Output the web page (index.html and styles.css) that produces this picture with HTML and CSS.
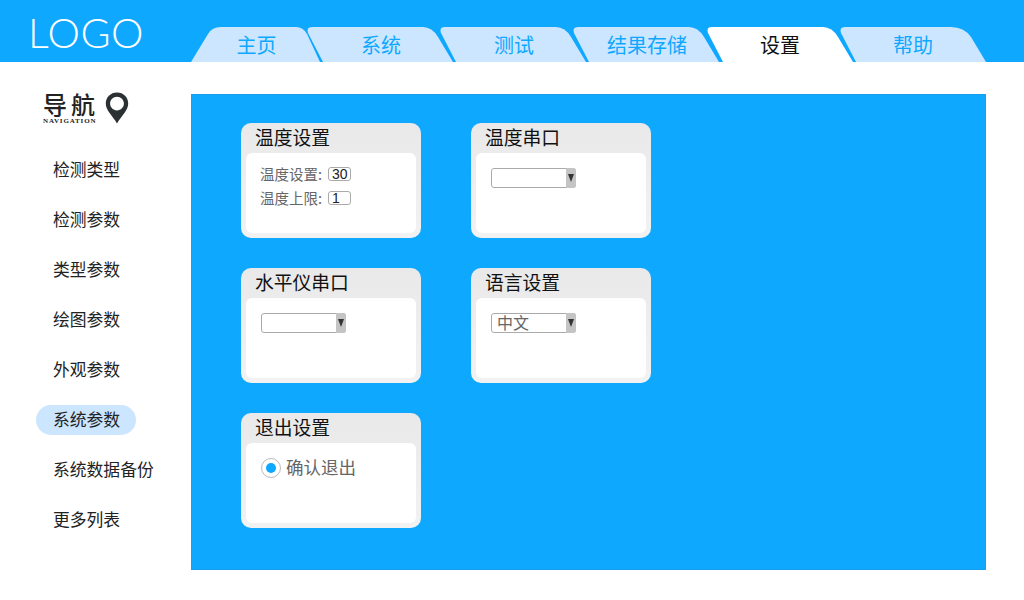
FILE: index.html
```html
<!DOCTYPE html>
<html lang="zh-CN">
<head>
    <meta charset="UTF-8"/>
    <meta name="viewport" content="width=device-width, initial-scale=1.0"/>
    <title>设置</title>
    <link rel="stylesheet" href="styles.css">
</head>
<body>
<header class="top-bar">
    <div class="logo">LOGO</div>
    <nav class="tabs">
        <a class="tab tab-first">主页</a>
        <a class="tab">系统</a>
        <a class="tab">测试</a>
        <a class="tab">结果存储</a>
        <a class="tab tab-active">设置</a>
        <a class="tab tab-last">帮助</a>
    </nav>
</header>

<div class="page">
    <aside class="sidebar">
        <div class="brand">
            <div class="brand-text">
                <div class="brand-title">导航</div>
                <div class="brand-sub">NAVIGATION</div>
            </div>
            <svg class="brand-pin" width="24" height="32" viewBox="0 0 24 32">
                <path fill="#2b3033" fill-rule="evenodd" d="M12 0.5C5.4 0.5 0.8 5.4 0.8 11.6c0 3.4 1.500 6.300 3.600 9.200 2.400 3.300 5.400 6.800 7.600 10.700 2.200-3.900 5.200-7.400 7.600-10.700 2.100-2.900 3.600-5.800 3.600-9.200C23.200 5.400 18.600 0.500 12 0.500zM12 4.800c3.900 0 6.900 3 6.900 6.800s-3 6.800-6.900 6.800-6.900-3-6.900-6.800 3-6.800 6.900-6.800z"/>
            </svg>
        </div>
        <ul class="side-menu">
            <li class="side-item">检测类型</li>
            <li class="side-item">检测参数</li>
            <li class="side-item">类型参数</li>
            <li class="side-item">绘图参数</li>
            <li class="side-item">外观参数</li>
            <li class="side-item side-item-active">系统参数</li>
            <li class="side-item">系统数据备份</li>
            <li class="side-item">更多列表</li>
        </ul>
    </aside>

    <main class="panel">
        <section class="card">
            <h3 class="card-title">温度设置</h3>
            <div class="card-body card-body-rows">
                <label class="field">温度设置: <input class="num-input" type="text" value="30"/></label>
                <label class="field">温度上限: <input class="num-input" type="text" value="1"/></label>
            </div>
        </section>
        <section class="card">
            <h3 class="card-title">温度串口</h3>
            <div class="card-body">
                <div class="select"><span class="select-arrow"></span></div>
            </div>
        </section>
        <section class="card">
            <h3 class="card-title">水平仪串口</h3>
            <div class="card-body">
                <div class="select"><span class="select-arrow"></span></div>
            </div>
        </section>
        <section class="card">
            <h3 class="card-title">语言设置</h3>
            <div class="card-body">
                <div class="select">中文<span class="select-arrow"></span></div>
            </div>
        </section>
        <section class="card">
            <h3 class="card-title">退出设置</h3>
            <div class="card-body">
                <label class="radio-row"><input class="radio" type="radio" checked/>确认退出</label>
            </div>
        </section>
    </main>
</div>
</body>
</html>
```

FILE: styles.css
```css
:root {
    --blue: #0fa8ff;
    --light-blue: #cce6ff;
    --cjk: "Noto Sans CJK SC", "Liberation Sans", sans-serif;
}

html, body {
    height: 100%;
    margin: 0;
    padding: 0;
}

body {
    background-color: white;
    color: #111;
    font-family: var(--cjk);
    overflow: hidden;
}

/* header */
.top-bar {
    display: flex;
    align-items: flex-end;
    height: 62px;
    background-color: var(--blue);
}

.logo {
    align-self: flex-start;
    width: 161px;
    padding: 9px 0 0 28px;
    box-sizing: border-box;
    color: white;
    font-family: Lato, "Liberation Sans", sans-serif;
    font-size: 41px;
    font-weight: 300;
    line-height: 47px;
    letter-spacing: 0.5px;
    white-space: nowrap;
}

.tabs {
    display: flex;
    margin-left: 30px;
}

.tab {
    display: flex;
    align-items: center;
    justify-content: center;
    width: 148px;
    height: 35px;
    margin-left: -15px;
    background-color: var(--light-blue);
    color: var(--blue);
    font-size: 20px;
    clip-path: path("M16 35 L1 6 Q-1 0 5 0 L116 0 Q125 0 131 10 L146 35 Z");
}

.tab-first {
    width: 131px;
    margin-left: 0;
    clip-path: path("M0 35 L17 7 Q21 0 30 0 L105 0 Q112 0 116 7 L129 35 Z");
}

.tab-last {
    width: 146px;
    clip-path: path("M16 35 L1 6 Q-1 0 5 0 L111 0 Q124 0 131 10 L146 35 Z");
}

.tab-active {
    box-sizing: border-box;
    margin-left: -14px;
    padding-right: 2px;
    background-color: white;
    color: #111;
}

/* layout below the header */
.page {
    display: flex;
    padding-top: 32px;
}

.sidebar {
    width: 191px;
    flex-shrink: 0;
}

.brand {
    display: flex;
    align-items: flex-start;
    gap: 6px;
    height: 61px;
    padding-left: 43px;
    box-sizing: border-box;
}

.brand-title {
    height: 24px;
    margin-top: -2px;
    color: #222;
    font-size: 24px;
    font-weight: 500;
    line-height: 24px;
    letter-spacing: 4px;
}

.brand-sub {
    margin-top: 1px;
    color: #222;
    font-family: "Liberation Serif", serif;
    font-size: 7px;
    font-weight: 700;
    line-height: 8px;
    letter-spacing: 0.85px;
    white-space: nowrap;
}

.brand-pin {
    margin-top: -2px;
}

.side-menu {
    display: flex;
    flex-direction: column;
    gap: 20px;
    margin: 0;
    padding: 0 0 0 36px;
    list-style: none;
}

.side-item {
    width: 100px;
    height: 30px;
    padding-left: 17px;
    box-sizing: border-box;
    font-size: 16.800px;
    line-height: 28px;
    color: #222;
    white-space: nowrap;
}

.side-item-active {
    background-color: var(--light-blue);
    border-radius: 15px;
}

/* main blue panel */
.panel {
    display: grid;
    grid-template-columns: repeat(2, 180px);
    grid-auto-rows: 115px;
    align-content: start;
    gap: 30px 50px;
    width: 795px;
    height: 476px;
    padding: 28px 0 0 49px;
    box-sizing: border-box;
    background-color: var(--blue);
    border: 1px solid #1ba0ec;
}

.card {
    display: flex;
    flex-direction: column;
    padding: 0 5px 5px;
    background: linear-gradient(#e9e9e9, #f2f2f2);
    border-radius: 10px;
}

.card-title {
    height: 30px;
    margin: 0;
    padding-left: 9px;
    color: #111;
    font-size: 18.800px;
    font-weight: 400;
    line-height: 28px;
    white-space: nowrap;
}

.card-body {
    flex-grow: 1;
    padding: 15px;
    background-color: white;
    border-radius: 6px;
}

.card-body-rows {
    display: flex;
    flex-direction: column;
    gap: 10px;
    padding: 14px;
}

.field {
    display: flex;
    align-items: center;
    gap: 6px;
    height: 14px;
    color: #666;
    font-size: 14.500px;
    line-height: 14px;
    white-space: nowrap;
}

.num-input {
    width: 23px;
    height: 14px;
    margin: 0;
    padding: 0 0 0 3px;
    box-sizing: border-box;
    border: 1px solid #aaa;
    border-radius: 3px;
    color: #222;
    font-family: "Liberation Sans", sans-serif;
    font-size: 14px;
    outline: none;
}

.select {
    position: relative;
    width: 85px;
    height: 20px;
    padding-left: 5px;
    box-sizing: border-box;
    border: 1px solid #aaa;
    border-radius: 3px;
    color: #666;
    font-size: 16px;
    line-height: 16px;
}

.select-arrow {
    position: absolute;
    top: -1px;
    right: -1px;
    width: 10px;
    height: 20px;
    background-color: #c4c4c4;
    border-radius: 0 3px 3px 0;
}

.select-arrow::after {
    content: "";
    position: absolute;
    top: 6px;
    left: 2px;
    border-top: 8px solid #333;
    border-left: 3px solid transparent;
    border-right: 3px solid transparent;
}

.radio-row {
    display: flex;
    align-items: flex-start;
    gap: 5px;
    color: #666;
    font-size: 17.500px;
    line-height: 18px;
}

.radio {
    width: 20px;
    height: 20px;
    margin: 0;
    appearance: none;
    background-color: var(--blue);
    background-clip: content-box;
    padding: 4px;
    border: 1px solid #bbb;
    border-radius: 50%;
    box-sizing: border-box;
}
```
